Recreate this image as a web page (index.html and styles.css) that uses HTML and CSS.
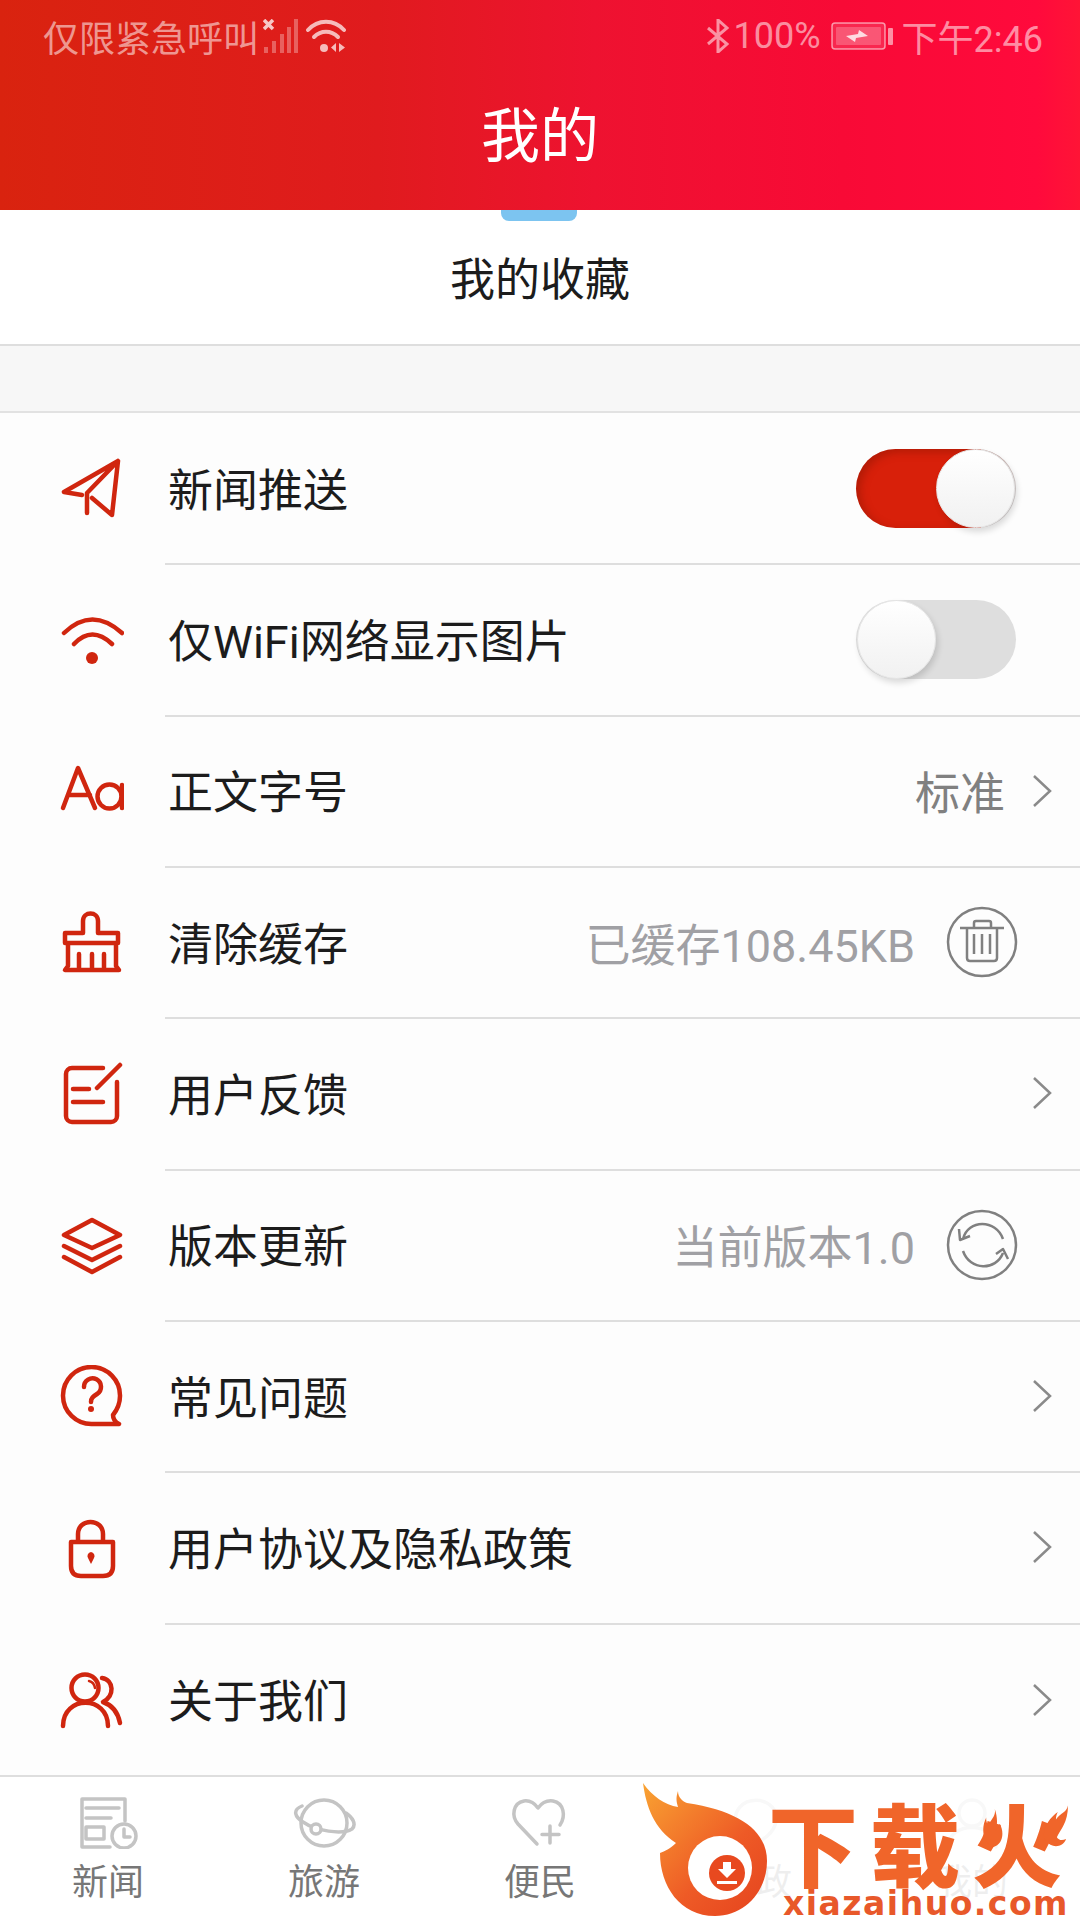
FILE: index.html
```html
<!DOCTYPE html>
<html lang="zh">
<head>
<meta charset="utf-8">
<title>我的</title>
<link rel="stylesheet" href="styles.css">
</head>
<body>
<div class="page">
  <header class="header">
    <div class="status">
      <div class="status-left">
        <span>仅限紧急呼叫</span>
        <svg class="ic-signal" viewBox="0 0 36 34"><path d="M1 1l9 9M10 1l-9 9" stroke="#fff" stroke-opacity=".75" stroke-width="3.5" fill="none"/><g fill="#fff" fill-opacity=".3"><rect x="1" y="28" width="4" height="6"/><rect x="9" y="22" width="4" height="12"/><rect x="17" y="15" width="4" height="19"/><rect x="24" y="8" width="4" height="26"/><rect x="31" y="0" width="4" height="34"/></g></svg>
        <svg class="ic-wifi" viewBox="0 0 42 34"><g fill="none" stroke="#fff" stroke-opacity=".7" stroke-width="4" stroke-linecap="round"><path d="M2 11C12 0 28 0 38 11"/><path d="M8 18c7-7 17-7 24 0"/></g><circle cx="18" cy="29" r="4" fill="#fff" fill-opacity=".7"/><path d="M30 24v9l-5-4.500zM33 24v9l6-4.500z" fill="#fff" fill-opacity=".7"/></svg>
      </div>
      <div class="status-right">
        <svg class="ic-bt" viewBox="0 0 22 34"><path d="M1 9l19 16-9 8V1l9 8L1 25" fill="none" stroke="#fff" stroke-opacity=".55" stroke-width="3"/></svg>
        <span class="pct">100%</span>
        <svg class="ic-batt" viewBox="0 0 62 30"><rect x="1" y="2" width="53" height="26" rx="3" fill="#fff" fill-opacity=".12" stroke="#fff" stroke-opacity=".55" stroke-width="1.5"/><rect x="5" y="6" width="45" height="18" rx="1" fill="#fff" fill-opacity=".22"/><path d="M15 15l12-2 1-4 9 6-12 2-1 4z" fill="#fff" fill-opacity=".8"/><rect x="57" y="7" width="5" height="17" rx="1" fill="#fff" fill-opacity=".55"/></svg>
        <span class="clock">下午2:46</span>
      </div>
    </div>
    <h1 class="title">我的</h1>
  </header>

  <section class="fav">
    <i class="fav-notch"></i>
    <span>我的收藏</span>
  </section>
  <div class="gap"></div>

  <ul class="list">
    <li class="row">
      <svg class="icon" viewBox="0 0 64 64"><path d="M4 35L58 4 52 58 32 41M4 35l18 3M58 4L27 36v20"/></svg>
      <div class="row-body"><span class="label">新闻推送</span><span class="switch on"><i class="knob"></i></span></div>
    </li>
    <li class="row">
      <svg class="icon" viewBox="0 0 64 64"><path d="M4 25Q32-2 62 25M14 36Q32 17 52 36"/><circle class="solid" cx="32" cy="50" r="6"/></svg>
      <div class="row-body"><span class="label">仅WiFi网络显示图片</span><span class="switch"><i class="knob"></i></span></div>
    </li>
    <li class="row">
      <svg class="icon" viewBox="0 0 64 64"><path d="M3 49L18 9l17 40M9 36h21"/><circle cx="49.5" cy="37.5" r="12"/><path d="M62 26v23"/></svg>
      <div class="row-body"><span class="label">正文字号</span><span class="value dark">标准</span><svg class="chev" viewBox="0 0 20 34"><path d="M2 2l16 15L2 32"/></svg></div>
    </li>
    <li class="row">
      <svg class="icon" viewBox="0 0 64 64"><path d="M5 22h18V10c0-10 15-10 15 0v12h20v10H5zM8 32v23l-3 4h54l-3-4V32M19 43v15M32 43v15M44 43v15"/></svg>
      <div class="row-body"><span class="label">清除缓存</span><span class="value">已缓存108.45KB</span>
        <svg class="round" viewBox="0 0 72 72"><circle cx="36" cy="36" r="34"/><path d="M14 22h44M28 21v-4q0-2 2-2h13q2 0 2 2v4M21 22v30q0 3 3 3h24q3 0 3-3V22M28 28v20M36 28v20M44 28v20"/></svg></div>
    </li>
    <li class="row">
      <svg class="icon" viewBox="0 0 64 64"><path d="M43 6H12a6 6 0 0 0-6 6v42a6 6 0 0 0 6 6h39a6 6 0 0 0 6-6V20M37 26L60 3M13 27h16M13 40h30"/></svg>
      <div class="row-body"><span class="label">用户反馈</span><svg class="chev solo" viewBox="0 0 20 34"><path d="M2 2l16 15L2 32"/></svg></div>
    </li>
    <li class="row">
      <svg class="icon" viewBox="0 0 64 64"><path d="M32 7l28 15-28 13L4 22zM4 33l28 14 28-14M4 44l28 15 28-15"/></svg>
      <div class="row-body"><span class="label">版本更新</span><span class="value">当前版本1.0</span>
        <svg class="round" viewBox="0 0 72 72"><circle cx="36" cy="36" r="34"/><path d="M17 30C22 10 50 10 57 30M17 42C24 62 50 62 57 44M13 20l1 11 10-4M62 50l-5-10-7 5"/></svg></div>
    </li>
    <li class="row">
      <svg class="icon" viewBox="0 0 64 64"><path d="M59 59H32A28.500 28.500 0 1 1 60 31c0 8-3 14-7 19 0 4 2 7 6 9z"/><path d="M24 22a8.500 8.500 0 1 1 13 7c-4 2.500-6 4-6 8"/><circle class="solid" cx="31" cy="44" r="3"/></svg>
      <div class="row-body"><span class="label">常见问题</span><svg class="chev solo" viewBox="0 0 20 34"><path d="M2 2l16 15L2 32"/></svg></div>
    </li>
    <li class="row">
      <svg class="icon" viewBox="0 0 64 64"><path d="M11 26h42v24q0 10-10 10H21q-10 0-10-10zM18 26V18c0-16 25-16 25 0v8"/><path class="solid" d="M31 36a4 4 0 0 1 3 6l-3 6-3-6a4 4 0 0 1 3-6z"/></svg>
      <div class="row-body"><span class="label">用户协议及隐私政策</span><svg class="chev solo" viewBox="0 0 20 34"><path d="M2 2l16 15L2 32"/></svg></div>
    </li>
    <li class="row last">
      <svg class="icon" viewBox="0 0 64 64"><circle cx="25" cy="21" r="13.500"/><path d="M3 59C3 28 48 28 48 59M42 11c12 2 13 18 1 24 9 3 15 11 17 21"/><path class="thin" d="M29 14q5 1 6 7"/></svg>
      <div class="row-body"><span class="label">关于我们</span><svg class="chev solo" viewBox="0 0 20 34"><path d="M2 2l16 15L2 32"/></svg></div>
    </li>
  </ul>

  <nav class="tabs">
    <div class="tab">
      <svg class="tab-ic" viewBox="0 0 60 52"><path d="M47 24V2H4v48h28M8 11h33M8 21h25M8 30h18v12H8z"/><circle cx="46" cy="39" r="12"/><path d="M46 32v8h6"/></svg>
      <span>新闻</span>
    </div>
    <div class="tab">
      <svg class="tab-ic" viewBox="0 0 64 52"><circle cx="32" cy="26" r="23"/><path d="M10 9C0 13 3 20 11 25c13 9 39 13 49 7 5-5 0-12-6-16"/><circle class="fill" cx="24" cy="32" r="5"/></svg>
      <span>旅游</span>
    </div>
    <div class="tab">
      <svg class="tab-ic" viewBox="0 0 60 52"><path d="M27 47L8 27C1 19 3 6 14 4c7-1 11 3 14 7 3-4 8-8 15-7 11 2 13 15 7 24M40 29v17M32 37.500h17"/></svg>
      <span>便民</span>
    </div>
    <div class="tab">
      <svg class="tab-ic" viewBox="0 0 60 52"><path d="M14 10c8-9 24-9 32 0s6 26-16 36C8 36 6 19 14 10z"/></svg>
      <span>问政</span>
    </div>
    <div class="tab">
      <svg class="tab-ic" viewBox="0 0 60 52"><circle cx="30" cy="16" r="13"/><path d="M6 50c0-26 48-26 48 0"/></svg>
      <span>我的</span>
    </div>
  </nav>

  <div class="logo">
    <svg class="logo-flame" viewBox="0 0 130 140">
      <defs><linearGradient id="fl" x1="0" y1="0" x2="1" y2="1"><stop offset="0" stop-color="#f9a332"/><stop offset=".6" stop-color="#ee5a26"/><stop offset="1" stop-color="#e5431e"/></linearGradient></defs>
      <path fill="url(#fl)" d="M3 2C6 25 14 48 36 62 30 68 25 70 20 72 20 105 40 135 75 135c30 0 52-25 52-55 0-30-27-50-80-58-5-2-9-6-9-12-2 6-2 10 0 16C25 24 12 15 3 2z"/>
      <circle cx="80" cy="87" r="32" fill="#fff"/>
      <circle cx="87" cy="92" r="18" fill="#e8491f"/>
      <path d="M83 81h8v7h5l-9 9-9-9h5zM77 100h20v3H77z" fill="#fff"/>
    </svg>
    <div class="logo-text">
      <span class="logo-cn">下载火</span>
      <span class="logo-en">xiazaihuo.com</span>
    </div>
    <svg class="logo-spark left" viewBox="0 0 24 46"><path d="M14 0c2 8-4 12-8 20C3 14 4 10 4 10-3 24 0 40 12 46c12-3 14-18 8-28-1 4-3 6-5 8 3-8 2-18-1-26z"/></svg>
    <svg class="logo-spark right" viewBox="0 0 28 44"><path d="M28 0c-2 8-8 8-13 15 0-3 1-6 2-8C7 14-2 28 4 38c6 8 18 8 22-2-5 2-8 1-10-2 4-8 12-16 12-34z"/></svg>
  </div>
</div>
</body>
</html>
```
FILE: styles.css
```css
* { box-sizing: border-box; }
html, body { margin: 0; padding: 0; }
body {
  width: 1080px;
  height: 1920px;
  overflow: hidden;
  background: #fdfdfd;
  font-family: Roboto, "Noto Sans CJK SC", sans-serif;
  color: #1c1c1c;
}
.page {
  position: relative;
  width: 1080px;
  height: 1920px;
  display: flex;
  flex-direction: column;
}

/* header */
.header {
  height: 210px;
  flex: none;
  color: #fff;
  background: linear-gradient(90deg, #d9230f 0%, #e01b1e 35%, #ee1230 55%, #f80a36 78%, #ff0a3c 96%, #ff1436 100%);
  display: flex;
  flex-direction: column;
}
.status {
  height: 72px;
  flex: none;
  padding: 0 37px 0 43px;
  display: flex;
  align-items: center;
  justify-content: space-between;
  font-size: 36px;
  color: rgba(255, 255, 255, .55);
}
.status-left, .status-right { display: flex; align-items: center; }
.ic-signal { width: 36px; height: 34px; margin-left: 4px; }
.ic-wifi { width: 42px; height: 34px; margin-left: 7px; }
.ic-bt { width: 22px; height: 34px; margin-right: 5px; }
.pct { width: 86px; }
.ic-batt { width: 62px; height: 30px; margin-left: 11px; margin-right: 9px; }
.clock { white-space: nowrap; }
.title {
  margin: 0;
  flex: 1;
  display: flex;
  align-items: center;
  justify-content: center;
  padding-bottom: 19px;
  font-size: 59px;
  font-weight: 400;
  color: #fff;
}

/* favourites */
.fav {
  position: relative;
  height: 136px;
  flex: none;
  background: #fff;
  border-bottom: 2px solid #dedede;
  display: flex;
  align-items: center;
  justify-content: center;
  font-size: 45px;
  padding-bottom: 2px;
}
.fav-notch {
  position: absolute;
  top: 0;
  left: 501px;
  width: 76px;
  height: 11px;
  background: #7cc4f0;
  border-radius: 0 0 8px 8px;
}
.gap {
  height: 67px;
  flex: none;
  background: #f7f7f7;
  border-bottom: 2px solid #e2e2e2;
}

/* list */
.list {
  list-style: none;
  margin: 0;
  padding: 0;
  flex: 1;
  display: flex;
  flex-direction: column;
  background: #fdfdfd;
}
.row {
  flex: 1;
  display: flex;
  align-items: center;
  padding-left: 60px;
  min-height: 0;
}
.icon {
  width: 64px;
  height: 64px;
  flex: none;
  margin-right: 41px;
  fill: none;
  stroke: #d0260f;
  stroke-width: 4.5;
  stroke-linecap: round;
  stroke-linejoin: round;
}
.icon .solid { fill: #d0260f; stroke: none; }
.icon .thin { stroke-width: 2.5; }
.row-body {
  flex: 1;
  align-self: stretch;
  display: flex;
  align-items: center;
  padding: 0 28px 0 3px;
  border-bottom: 2px solid #dedede;
  margin-bottom: -1px;
}
.row.last .row-body { border-bottom: 0; }
.label { font-size: 45px; color: #1c1c1c; margin-right: auto; white-space: nowrap; position: relative; top: -1px; }
.value { font-size: 45px; color: #a0a0a4; white-space: nowrap; }
.value.dark { color: #808080; margin-right: 27px; }
.chev { width: 20px; height: 34px; fill: none; stroke: #8a8a8a; stroke-width: 2.500; flex: none; }
.round {
  width: 72px;
  height: 72px;
  flex: none;
  margin-left: 31px;
  margin-right: 34px;
  fill: none;
  stroke: #808080;
  stroke-width: 2.500;
  stroke-linejoin: round;
}

/* switch */
.switch {
  position: relative;
  flex: none;
  width: 160px;
  height: 79px;
  margin-right: 36px;
  margin-top: 1px;
  border-radius: 40px;
  background: #dedede;
}
.switch.on {
  background: linear-gradient(90deg, #d8200a 0, #d8200a 78%, #dedede 78%);
  box-shadow: inset 4px 3px 8px rgba(120, 20, 0, .4);
}
.knob {
  position: absolute;
  top: 0;
  left: 1px;
  width: 79px;
  height: 79px;
  border-radius: 50%;
  border: 1px solid #e6e6e6;
  background: linear-gradient(180deg, #fff 0%, #f1f1f1 100%);
  box-shadow: 2px 4px 6px rgba(0, 0, 0, .14);
}
.switch.on .knob { left: 80px; }

/* tabs */
.tabs {
  flex: none;
  height: 145px;
  border-top: 2px solid #dedede;
  background: #fff;
  display: grid;
  grid-template-columns: repeat(5, 216px);
}
.tab {
  display: flex;
  flex-direction: column;
  align-items: center;
  padding-top: 20px;
  font-size: 36px;
  line-height: 44px;
  color: #777;
}
.tab-ic {
  height: 52px;
  width: 64px;
  margin-bottom: 12px;
  fill: none;
  stroke: #c4c4c4;
  stroke-width: 3.500;
  stroke-linejoin: round;
  stroke-linecap: round;
}
.tab-ic .fill { fill: #fff; }

/* watermark */
.logo {
  position: absolute;
  left: 640px;
  top: 1778px;
  width: 440px;
  height: 142px;
  background: rgba(255, 255, 255, .88);
  display: flex;
  align-items: flex-start;
}
.logo-flame { width: 130px; height: 140px; flex: none; margin-left: 0; margin-top: 3px; }
.logo-text {
  flex: none;
  display: flex;
  flex-direction: column;
  align-items: flex-start;
  margin-left: -2px;
}
.logo-cn {
  font-family: "Noto Sans CJK SC", sans-serif;
  font-weight: 900;
  font-size: 90px;
  line-height: 110px;
  letter-spacing: 12px;
  white-space: nowrap;
  margin-top: 8px;
  color: #f0652a;
}
.logo-en {
  font-family: "DejaVu Sans", sans-serif;
  font-weight: 700;
  font-size: 33px;
  line-height: 32px;
  letter-spacing: 1.500px;
  white-space: nowrap;
  margin-left: 15px;
  margin-top: -8px;
  color: #e8582a;
}
.logo-spark { position: absolute; top: 27px; fill: #f0652a; }
.logo-spark.left { left: 343px; width: 20px; height: 46px; }
.logo-spark.right { left: 402px; width: 26px; height: 42px; }
```
